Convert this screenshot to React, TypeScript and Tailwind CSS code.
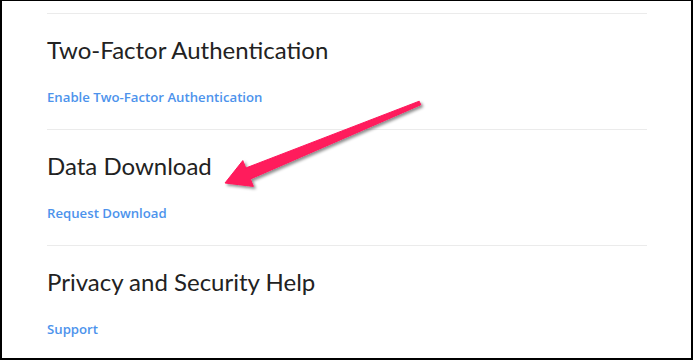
import React from 'react';

interface SectionProps {
  title: string;
  link: string;
}

const Section: React.FC<SectionProps> = ({ title, link }) => (
  <div className="border-t border-[#ebebeb] pt-[20px] pb-[22px]">
    <h2
      className="text-[24px] leading-[32px] text-[#222] font-normal"
      style={{ fontFamily: 'Lato, "Open Sans", sans-serif' }}
    >
      {title}
    </h2>
    <a href="#" className="mt-[21px] block text-[13.2px] leading-[20px] font-semibold text-[#4d93ec]">
      {link}
    </a>
  </div>
);

const Arrow: React.FC = () => (
  <svg
    className="absolute left-0 top-0 pointer-events-none"
    width="693"
    height="360"
    viewBox="0 0 693 360"
  >
    <defs>
      <filter id="shadow" x="-10%" y="-10%" width="130%" height="140%">
        <feDropShadow dx="2" dy="2" stdDeviation="1.5" floodColor="#000" floodOpacity="0.45" />
      </filter>
    </defs>
    <polygon
      points="223,182 251.4,185.4 248.4,178 418.8,103.8 417.2,100.2 243.8,167 240.8,159.6"
      fill="#ff1a5c"
      strokeLinejoin="round"
      stroke="#ff1a5c"
      strokeWidth="1"
      filter="url(#shadow)"
    />
  </svg>
);

export default function App() {
  return (
    <div
      className="relative w-[693px] h-[360px] bg-white border-t border-l-2 border-r-2 border-b-2 border-black overflow-hidden"
      style={{ fontFamily: '"Open Sans", "Noto Sans", sans-serif' }}
    >
      <div className="pt-[12px] pl-[45px] w-[645px]">
        <Section title="Two-Factor Authentication" link="Enable Two-Factor Authentication" />
        <Section title="Data Download" link="Request Download" />
        <Section title="Privacy and Security Help" link="Support" />
      </div>
      <Arrow />
    </div>
  );
}
